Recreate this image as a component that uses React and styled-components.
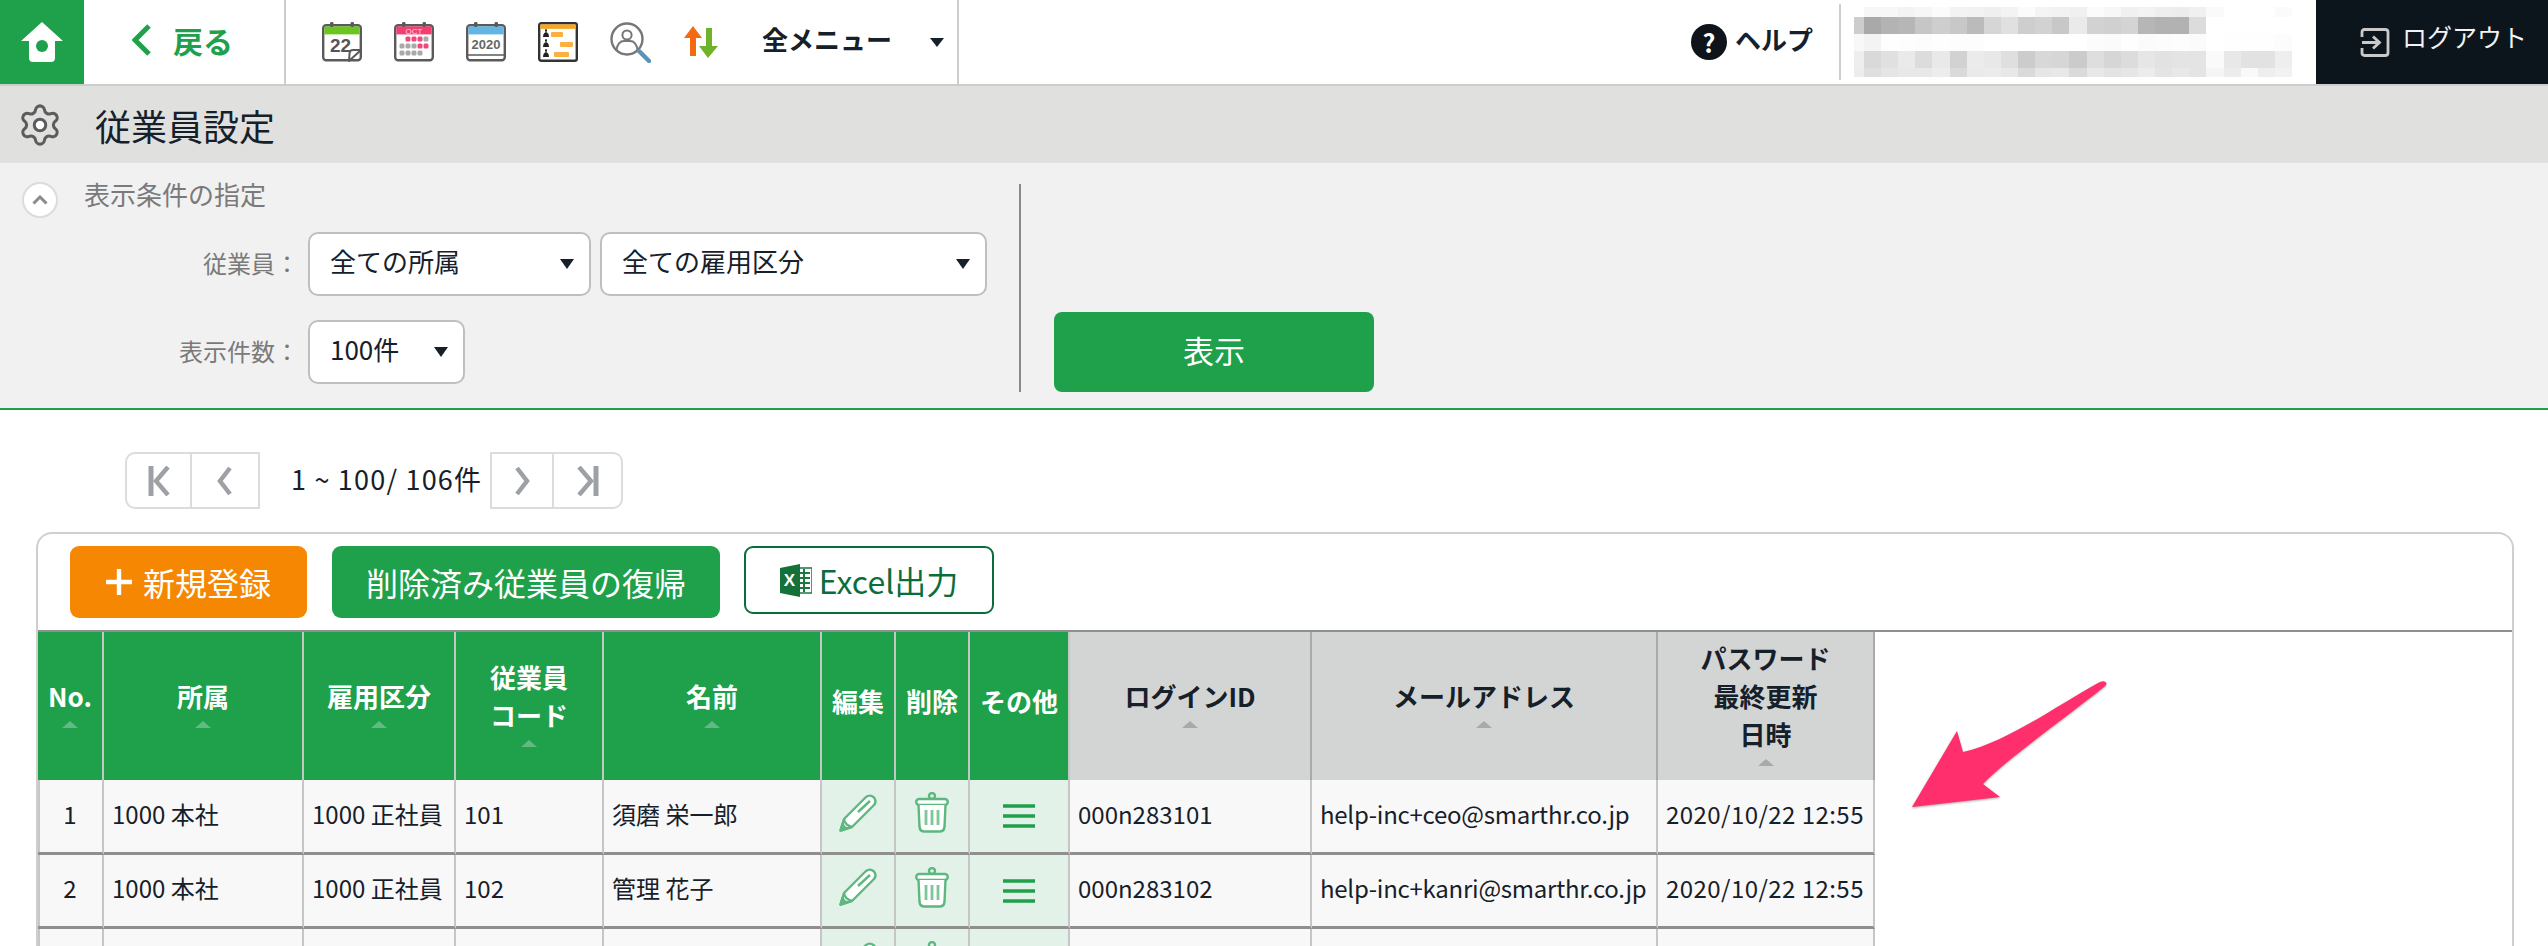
import React from "react";
import styled, { createGlobalStyle } from "styled-components";
import { Settings } from "lucide-react";

const GREEN = "#1fa04b";
const INK = "#16202a";
const FONT = '"Noto Sans CJK JP", "Noto Sans", sans-serif';

const Global = createGlobalStyle`
  html, body { margin: 0; padding: 0; background: #fff; }
  body { font-family: ${FONT}; color: ${INK}; }
  * { box-sizing: border-box; }
`;

const Page = styled.div`
  position: relative;
  width: 2548px;
  height: 946px;
  overflow: hidden;
  background: #fff;
`;

/* ---------- top bar ---------- */
const TopBar = styled.header`
  display: flex;
  align-items: stretch;
  height: 86px;
  border-bottom: 2px solid #cdcdcb;
  background: #fff;
`;
const HomeButton = styled.div`
  width: 84px;
  background: ${GREEN};
  display: flex;
  align-items: center;
  justify-content: center;
`;
const BackButton = styled.div`
  width: 202px;
  border-right: 2px solid #cdcdcd;
  display: flex;
  align-items: center;
  padding: 0 0 5px 48px;
  gap: 21px;
  color: ${GREEN};
  font-size: 30px;
  font-weight: 700;
  line-height: 60px;
`;
const QuickMenu = styled.nav`
  width: 673px;
  border-right: 2px solid #cdcdcd;
  display: flex;
  align-items: center;
  padding-left: 36px;
`;
const QuickIcon = styled.span`
  width: 72px;
  height: 42px;
  display: flex;
  align-items: center;
  flex: none;
`;
const AllMenu = styled.span`
  font-size: 26px;
  font-weight: 700;
  line-height: 40px;
  margin: -6px 38px 0 8px;
  white-space: nowrap;
`;
const Caret = styled.i`
  display: block;
  flex: none;
  width: 0;
  height: 0;
  border-left: ${(p) => p.$w / 2}px solid transparent;
  border-right: ${(p) => p.$w / 2}px solid transparent;
  border-top: ${(p) => p.$h}px solid #16202a;
`;
const Spacer = styled.div`
  flex: 1;
`;
const Help = styled.div`
  display: flex;
  align-items: center;
  gap: 8px;
  font-size: 26px;
  font-weight: 700;
  line-height: 36px;
  padding-right: 26px;
  margin-top: -5px;
`;
const HelpMark = styled.span`
  width: 36px;
  height: 36px;
  margin-top: 5px;
  border-radius: 50%;
  background: #0e1419;
  color: #fff;
  font-size: 25px;
  font-weight: 700;
  line-height: 36px;
  text-align: center;
`;
const HelpLabel = styled.span`
  margin-top: -2px;
`;
const UserBlock = styled.div`
  width: 477px;
  margin: 4px 0;
  border-left: 2px solid #cdcdcd;
  padding: 3px 0 0 13px;
`;
const Logout = styled.div`
  width: 232px;
  background: #0d151c;
  color: #f2f2f2;
  display: flex;
  align-items: center;
  gap: 12px;
  padding-left: 44px;
  font-size: 25px;
  line-height: 30px;
  white-space: nowrap;
`;
const LogoutLabel = styled.span`
  margin-top: -12px;
`;

/* ---------- title ---------- */
const TitleBar = styled.div`
  height: 77px;
  background: #e0e0de;
  display: flex;
  align-items: center;
  padding-left: 17px;
  gap: 32px;
  font-size: 36px;
  line-height: 50px;
  svg circle { fill: #fff; }
`;

/* ---------- filter ---------- */
const Filter = styled.section`
  height: 247px;
  background: #f1f1f1;
  border-bottom: 2px solid ${GREEN};
  display: flex;
  padding: 19px 0 0 22px;
`;
const FilterForm = styled.div`
  width: 997px;
`;
const FilterHead = styled.div`
  display: flex;
  align-items: center;
  gap: 26px;
  height: 36px;
  color: #7a7a7a;
  font-size: 26px;
  line-height: 36px;
`;
const FilterHeadLabel = styled.span`
  margin-top: -12px;
`;
const Collapse = styled.span`
  width: 36px;
  height: 36px;
  border-radius: 50%;
  background: #fff;
  border: 2px solid #dcdcdc;
  display: flex;
  align-items: center;
  justify-content: center;
`;
const FilterRow = styled.div`
  display: flex;
  gap: 9px;
  align-items: center;
  margin-top: ${(p) => p.$top}px;
`;
const FilterLabel = styled.div`
  width: 277px;
  text-align: right;
  color: #7a7a7a;
  font-size: 24px;
  line-height: 36px;
  margin-top: -2px;
`;
const Select = styled.div`
  width: ${(p) => p.$w}px;
  height: 64px;
  background: #fff;
  border: 2px solid #bfbfbf;
  border-radius: 10px;
  display: flex;
  align-items: center;
  justify-content: space-between;
  padding: 0 15px 0 20px;
  font-size: 26px;
  line-height: 36px;
  color: #16202a;
`;
const SelectText = styled.span`
  margin-top: -6px;
`;
const FilterAction = styled.div`
  height: 208px;
  margin-top: 2px;
  border-left: 2px solid #8a8a8a;
  padding-left: 33px;
  display: flex;
  align-items: flex-end;
`;
const ShowButton = styled.div`
  width: 320px;
  height: 80px;
  border-radius: 8px;
  background: ${GREEN};
  color: #fff;
  font-size: 31px;
  line-height: 76px;
  text-align: center;
`;

/* ---------- pager ---------- */
const Pager = styled.div`
  display: flex;
  align-items: center;
  height: 57px;
  margin: 42px 0 0 125px;
`;
const PagerCell = styled.span`
  width: ${(p) => p.$w}px;
  height: 57px;
  border: 2px solid #dcdcdc;
  border-left-width: ${(p) => (p.$join ? 0 : 2)}px;
  border-radius: ${(p) => (p.$side === "l" ? "10px 0 0 10px" : p.$side === "r" ? "0 10px 10px 0" : "0")};
  display: flex;
  align-items: center;
  justify-content: center;
`;
const PagerInfo = styled.div`
  width: 230px;
  padding-left: 31px;
  font-size: 27px;
  letter-spacing: 1.2px;
  line-height: 36px;
  white-space: nowrap;
  margin-top: -4px;
`;

/* ---------- card ---------- */
const Card = styled.section`
  margin: 23px 34px 0 36px;
  border: 2px solid #cfcfcf;
  border-bottom: 0;
  border-radius: 16px 16px 0 0;
  height: 420px;
`;
const Toolbar = styled.div`
  display: flex;
  align-items: flex-start;
  padding: 12px 0 12px 32px;
  height: 98px;
  border-bottom: 2px solid #8f8f8f;
`;
const ActionButton = styled.div`
  height: 72px;
  width: ${(p) => p.$w}px;
  margin-right: ${(p) => p.$gap}px;
  border-radius: 9px;
  background: ${(p) => p.$bg};
  color: #fff;
  font-size: 32px;
  line-height: 70px;
  display: flex;
  align-items: center;
  justify-content: center;
  gap: 11px;
  white-space: nowrap;
`;
const ExcelButton = styled.div`
  width: 250px;
  height: 68px;
  border: 2px solid #0a6e3c;
  border-radius: 9px;
  color: #0a6e3c;
  font-size: 32px;
  line-height: 60px;
  display: flex;
  align-items: center;
  justify-content: center;
  gap: 7px;
`;

/* ---------- table ---------- */
const Table = styled.table`
  table-layout: fixed;
  width: 1837px;
  border-collapse: separate;
  border-spacing: 0;
`;
const Col = styled.col`
  width: ${(p) => p.$w}px;
`;
const Th = styled.th`
  height: 148px;
  padding: 0 0 3px;
  background: ${(p) => (p.$grey ? "#d3d5d4" : GREEN)};
  color: ${(p) => (p.$grey ? INK : "#fff")};
  border-right: 2px solid ${(p) => (p.$grey ? "#a9abab" : "#c2c9c4")};
  font-size: 26px;
  font-weight: 700;
  text-align: center;
  vertical-align: middle;
  line-height: 38px;
`;
const ThLine = styled.div`
  white-space: nowrap;
`;
const PlainHead = styled.div`
  margin-bottom: 7px;
`;
const SortMark = styled.i`
  display: block;
  width: 0;
  height: 0;
  margin: 6px auto 5px;
  border-left: 8px solid transparent;
  border-right: 8px solid transparent;
  border-bottom: 7px solid ${(p) => (p.$grey ? "#a7aaad" : "#62b981")};
`;
const Row = styled.tr`
  td { height: 74px; }
  &:first-child td { height: 75px; }
`;
const Td = styled.td`
  padding: 0 0 5px ${(p) => (p.$center ? 0 : 8)}px;
  background: #f8f8f8;
  border-right: 2px solid #c6c6c6;
  border-bottom: 3px solid #8f8f8f;
  font-size: 24px;
  line-height: 34px;
  letter-spacing: ${(p) => p.$ls || 0}px;
  text-align: ${(p) => (p.$center ? "center" : "left")};
  white-space: nowrap;
  overflow: hidden;
  &:first-child { box-shadow: inset 2px 0 0 #c6c6c6; }
`;
const ActionTd = styled.td`
  padding: 0;
  background: #e2f2e9;
  border-right: 2px solid #c6c6c6;
  border-bottom: 3px solid #8f8f8f;
  text-align: center;
  vertical-align: middle;
`;
const IconWrap = styled.div`
  display: flex;
  justify-content: center;
  margin-bottom: ${(p) => p.$mb || 0}px;
`;

const ArrowMark = styled.svg`
  position: absolute;
  left: 1905px;
  top: 675px;
  overflow: visible;
  filter: drop-shadow(0 1px 1px rgba(60, 60, 60, 0.45));
`;

/* ---------- drawings ---------- */
const Dark = "#5a5a5a";
const CalBase = ({ band, children }) => (
  <svg width="40" height="40" viewBox="0 0 40 40">
    <rect x="1.2" y="3.2" width="37.6" height="35" rx="3" fill="#fff" stroke={Dark} strokeWidth="2.4" />
    <rect x="2.4" y="4.4" width="35.2" height="8" fill={band} />
    <rect x="8" y="0" width="3.4" height="5" rx="1.2" fill={Dark} />
    <rect x="28.6" y="0" width="3.4" height="5" rx="1.2" fill={Dark} />
    {children}
  </svg>
);
const Cal22 = () => (
  <CalBase band="#6cc51e">
    <text x="18.5" y="30" textAnchor="middle" fontFamily="Liberation Sans, sans-serif" fontWeight="700" fontSize="19" fill="#555">22</text>
    <path d="M27 39 L39 28 H31 Q27.5 28 27.5 32 Z" fill="#fff" stroke={Dark} strokeWidth="2" strokeLinejoin="round" />
  </CalBase>
);
const CalOct = () => {
  const dots = [
    [14, 17, 1], [20, 17, 1], [26, 17, 1], [32, 17, 0],
    [8, 24, 0], [14, 24, 0], [20, 24, 0], [26, 24, 1], [32, 24, 1],
    [8, 31, 0], [14, 31, 0], [20, 31, 0], [26, 31, 0],
  ];
  return (
    <CalBase band="#f53d6f">
      <text x="20" y="11.5" textAnchor="middle" fontFamily="Liberation Sans, sans-serif" fontSize="8" fill="#ffd6e2">OCT</text>
      {dots.map(([x, y, h]) => (
        <rect key={`${x}-${y}`} x={x - 2.5} y={y - 2.5} width="5" height="5" rx="1.5" fill={h ? "#f0487a" : "#a9a9a9"} />
      ))}
    </CalBase>
  );
};
const Cal2020 = () => (
  <CalBase band="#62b6e6">
    <text x="20" y="27" textAnchor="middle" fontFamily="Liberation Sans, sans-serif" fontWeight="700" fontSize="13" fill="#666">2020</text>
    <path d="M2 33 H38" stroke={Dark} strokeWidth="1.6" />
  </CalBase>
);
const Gantt = () => (
  <svg width="40" height="40" viewBox="0 0 40 40">
    <rect x="1.2" y="1.2" width="37.6" height="37.6" rx="2" fill="#fff" stroke="#333" strokeWidth="2.4" />
    <rect x="2.4" y="2.4" width="35.2" height="4.5" fill="#f5a623" />
    {[10, 20, 30].map((y) => (
      <path key={y} d={`M8 ${y - 3} a1.6 1.6 0 0 1 0 3 q3 1 3 5 h-6 q0 -4 3 -5 a1.6 1.6 0 0 1 0 -3`} fill="#222" />
    ))}
    <rect x="13" y="10" width="12" height="5" rx="1" fill="#fbb040" />
    <rect x="22" y="20" width="13" height="5" rx="1" fill="#fbb040" />
    <rect x="16" y="30" width="15" height="5" rx="1" fill="#fbb040" />
  </svg>
);
const PersonSearch = () => (
  <svg width="41" height="41" viewBox="0 0 41 41">
    <circle cx="17" cy="17" r="15.5" fill="#fff" stroke="#777" strokeWidth="2.4" />
    <circle cx="17" cy="13" r="4.6" fill="#fff" stroke="#777" strokeWidth="2" />
    <path d="M6.5 28 Q8 19 14 19 H20 Q26 19 27.5 28" fill="none" stroke="#777" strokeWidth="2" />
    <path d="M29 29 L39 39" stroke="#5b93b8" strokeWidth="4.4" strokeLinecap="round" />
  </svg>
);
const SwapArrows = () => (
  <svg width="37" height="32" viewBox="0 0 37 32">
    <path d="M11 0 L20 12 H14 V30 H8 V12 H2 Z" fill="#f26a12" />
    <path d="M26 32 L36 20 H30 V2 H24 V20 H17 Z" fill="#6fb32b" />
  </svg>
);
const House = () => (
  <svg width="42" height="40" viewBox="0 0 42 40">
    <path d="M21 0 L42 19 H34 V36 Q34 40 30 40 H12 Q8 40 8 36 V19 H0 Z" fill="#fff" />
    <circle cx="21" cy="24" r="6" fill={GREEN} />
  </svg>
);
const Chevron = ({ dir = "l", w = 20, h = 32, color = GREEN, sw = 5 }) => (
  <svg width={w} height={h} viewBox={`0 0 ${w} ${h}`}>
    <path
      d={dir === "l" ? `M${w - 3} 2 L3 ${h / 2} L${w - 3} ${h - 2}` : `M3 2 L${w - 3} ${h / 2} L3 ${h - 2}`}
      fill="none"
      stroke={color}
      strokeWidth={sw}
    />
  </svg>
);
const PagerEnd = ({ dir }) => (
  <svg width="22" height="30" viewBox="0 0 22 30">
    {dir === "l" ? (
      <g fill="none" stroke="#9da1a6">
        <path d="M3 0 V30" strokeWidth="5" />
        <path d="M20 1 L8 15 L20 29" strokeWidth="4.5" />
      </g>
    ) : (
      <g fill="none" stroke="#9da1a6">
        <path d="M19 0 V30" strokeWidth="5" />
        <path d="M2 1 L14 15 L2 29" strokeWidth="4.5" />
      </g>
    )}
  </svg>
);
const LogoutIcon = () => (
  <svg width="30" height="29" viewBox="0 0 30 29" fill="none" stroke="#c9c9c9" strokeWidth="2.8">
    <path d="M2 9 V4 Q2 1.5 4.5 1.5 H25 Q28 1.5 28 4 V25 Q28 27.5 25 27.5 H4.5 Q2 27.5 2 25 V20" />
    <path d="M2 14.5 H19 M13 8.5 L19.5 14.5 L13 20.5" />
  </svg>
);
const Plus = () => (
  <svg width="26" height="26" viewBox="0 0 26 26">
    <path d="M13 0 V26 M0 13 H26" stroke="#fff" strokeWidth="4.4" />
  </svg>
);
const ExcelLogo = () => (
  <svg width="32" height="33" viewBox="0 0 32 33">
    <rect x="15" y="4" width="17" height="25" fill="#fff" stroke="#1a7a3e" strokeWidth="1.5" />
    <path d="M18 9 H30 M18 14 H30 M18 19 H30 M18 24 H30 M24 5 V28" stroke="#1a7a3e" strokeWidth="2" />
    <path d="M0 4 L20 0 V33 L0 29 Z" fill="#14713a" />
    <text x="9.5" y="22" textAnchor="middle" fontFamily="Liberation Sans, sans-serif" fontWeight="700" fontSize="17" fill="#fff">X</text>
  </svg>
);
const Pencil = () => (
  <svg width="38" height="38" viewBox="0 0 38 38" fill="none" stroke="#5cb87e" strokeWidth="2.4" strokeLinejoin="round">
    <path d="M1.5 36.5 L5 25 L27 3 Q31 0 35 3.5 Q38 7.5 35 11 L13 33 Z" fill="#fff" />
    <path d="M5 25 Q5.5 31 13 33" />
    <path d="M1.5 36.5 L3.5 30 Q5 34 8 34.5 Z" fill="#5cb87e" />
    <path d="M19 18 L31 7" />
  </svg>
);
const Trash = () => (
  <svg width="34" height="41" viewBox="0 0 34 41" fill="none" stroke="#5cb87e" strokeWidth="2.4" strokeLinejoin="round">
    <circle cx="17" cy="4" r="3" />
    <rect x="1.2" y="7" width="31.6" height="6" rx="3" fill="#fff" />
    <path d="M3.5 13 L4.5 35 Q5 39.5 9.5 39.5 H24.5 Q29 39.5 29.5 35 L30.5 13" fill="#fff" />
    <path d="M11 18 V33 M17 18 V33 M23 18 V33" strokeWidth="2.8" opacity="0.8" />
  </svg>
);
const Bars = () => (
  <svg width="32" height="24" viewBox="0 0 32 24">
    <path d="M0 2 H32 M0 12 H32 M0 22 H32" stroke={GREEN} strokeWidth="3.6" />
  </svg>
);

const MOSAIC = [
  { y: 0, h: 10, c: ["ff","f7","f7","f3","f6","fb","f3","f2","ef","f3","fb","f4","f2","f0","fb","f7","f0","f3","ee","ec","f0","fa","ff","ff","ff","fb"] },
  { y: 10, h: 17, c: ["cd","a9","b3","b6","c6","ce","c8","bb","d6","e0","ce","d2","c8","ea","d2","d0","d4","b6","b2","b2","dc","ff","ff","ff","ff","ff"] },
  { y: 27, h: 17, c: ["f8","f3","fe","fd","fc","fe","fd","fd","ff","ff","ff","ff","ff","ff","fc","fb","fe","fb","fc","fd","fb","ff","fe","fe","fe","fc"] },
  { y: 44, h: 17, c: ["ee","d9","e0","ea","dc","e9","d2","eb","e8","df","cc","d8","d6","cb","de","d6","dc","e6","e2","e4","e4","fa","e8","e2","e2","ee"] },
  { y: 61, h: 9, c: ["ec","df","e5","e8","e8","ed","da","ea","eb","e8","da","e6","e8","da","e8","e3","e6","ec","e4","e8","e4","f5","ec","f9","ee","f2"] },
];
const Mosaic = () => (
  <svg width="438" height="70" viewBox="0 0 438 70" shapeRendering="crispEdges">
    {MOSAIC.map((r) =>
      r.c.map((v, i) => (
        <rect
          key={`${r.y}-${i}`}
          x={i === 0 ? 0 : 10 + (i - 1) * 17.12}
          y={r.y}
          width={i === 0 ? 10 : 17.12}
          height={r.h}
          fill={`#${v}${v}${v}`}
        />
      ))
    )}
  </svg>
);

/* ---------- data ---------- */
const WIDTHS = [66, 200, 152, 148, 218, 74, 74, 100, 242, 346, 217];
const HEADS = [
  { t: ["No."], s: 1 },
  { t: ["所属"], s: 1 },
  { t: ["雇用区分"], s: 1 },
  { t: ["従業員", "コード"], s: 1 },
  { t: ["名前"], s: 1 },
  { t: ["編集"] },
  { t: ["削除"] },
  { t: ["その他"] },
  { t: ["ログインID"], s: 1, g: 1 },
  { t: ["メールアドレス"], s: 1, g: 1 },
  { t: ["パスワード", "最終更新", "日時"], s: 1, g: 1 },
];
const ROWS = [
  ["1", "1000 本社", "1000 正社員", "101", "須磨 栄一郎", "000n283101", "help-inc+ceo@smarthr.co.jp", "2020/10/22 12:55"],
  ["2", "1000 本社", "1000 正社員", "102", "管理 花子", "000n283102", "help-inc+kanri@smarthr.co.jp", "2020/10/22 12:55"],
  ["", "", "", "", "", "", "", ""],
];

export default function App() {
  return (
    <Page>
      <Global />
      <TopBar>
        <HomeButton><House /></HomeButton>
        <BackButton>
          <Chevron />
          <span>戻る</span>
        </BackButton>
        <QuickMenu>
          <QuickIcon><Cal22 /></QuickIcon>
          <QuickIcon><CalOct /></QuickIcon>
          <QuickIcon><Cal2020 /></QuickIcon>
          <QuickIcon><Gantt /></QuickIcon>
          <QuickIcon><PersonSearch /></QuickIcon>
          <QuickIcon><SwapArrows /></QuickIcon>
          <AllMenu>全メニュー</AllMenu>
          <Caret $w={15} $h={9} />
        </QuickMenu>
        <Spacer />
        <Help>
          <HelpMark>?</HelpMark>
          <HelpLabel>ヘルプ</HelpLabel>
        </Help>
        <UserBlock><Mosaic /></UserBlock>
        <Logout>
          <LogoutIcon />
          <LogoutLabel>ログアウト</LogoutLabel>
        </Logout>
      </TopBar>

      <TitleBar>
        <Settings size={46} strokeWidth={1.6} color="#5c5c5c" />
        <span>従業員設定</span>
      </TitleBar>

      <Filter>
        <FilterForm>
          <FilterHead>
            <Collapse>
              <svg width="16" height="10" viewBox="0 0 16 10">
                <path d="M1.5 8.5 L8 2 L14.5 8.5" fill="none" stroke="#8a8a8a" strokeWidth="3" />
              </svg>
            </Collapse>
            <FilterHeadLabel>表示条件の指定</FilterHeadLabel>
          </FilterHead>
          <FilterRow $top={14}>
            <FilterLabel>従業員：</FilterLabel>
            <Select $w={283}><SelectText>全ての所属</SelectText><Caret $w={15} $h={10} /></Select>
            <Select $w={387}><SelectText>全ての雇用区分</SelectText><Caret $w={15} $h={10} /></Select>
          </FilterRow>
          <FilterRow $top={24}>
            <FilterLabel>表示件数：</FilterLabel>
            <Select $w={157}><SelectText>100件</SelectText><Caret $w={15} $h={10} /></Select>
          </FilterRow>
        </FilterForm>
        <FilterAction>
          <ShowButton>表示</ShowButton>
        </FilterAction>
      </Filter>

      <Pager>
        <PagerCell $w={67} $side="l"><PagerEnd dir="l" /></PagerCell>
        <PagerCell $w={68} $join><Chevron w={16} h={30} color="#9da1a6" sw={4.5} /></PagerCell>
        <PagerInfo>1 ~ 100/ 106件</PagerInfo>
        <PagerCell $w={64}><Chevron dir="r" w={16} h={30} color="#9da1a6" sw={4.5} /></PagerCell>
        <PagerCell $w={69} $join $side="r"><PagerEnd dir="r" /></PagerCell>
      </Pager>

      <Card>
        <Toolbar>
          <ActionButton $bg="#f58703" $w={237} $gap={25}><Plus /><span>新規登録</span></ActionButton>
          <ActionButton $bg={GREEN} $w={388} $gap={24}>削除済み従業員の復帰</ActionButton>
          <ExcelButton><ExcelLogo /><span>Excel出力</span></ExcelButton>
        </Toolbar>
        <Table>
          <colgroup>
            {WIDTHS.map((w, i) => <Col key={i} $w={w} />)}
          </colgroup>
          <thead>
            <tr>
              {HEADS.map((h) => (
                <Th key={h.t[0]} $grey={h.g}>
                  {h.s ? (
                    <>
                      {h.t.map((l) => <ThLine key={l}>{l}</ThLine>)}
                      <SortMark $grey={h.g} />
                    </>
                  ) : (
                    <PlainHead>{h.t[0]}</PlainHead>
                  )}
                </Th>
              ))}
            </tr>
          </thead>
          <tbody>
            {ROWS.map((r, i) => (
              <Row key={i}>
                <Td $center>{r[0]}</Td>
                <Td>{r[1]}</Td>
                <Td>{r[2]}</Td>
                <Td>{r[3]}</Td>
                <Td>{r[4]}</Td>
                <ActionTd><IconWrap $mb={7}><Pencil /></IconWrap></ActionTd>
                <ActionTd><IconWrap $mb={7}><Trash /></IconWrap></ActionTd>
                <ActionTd><IconWrap><Bars /></IconWrap></ActionTd>
                <Td>{r[5]}</Td>
                <Td $ls={-0.25}>{r[6]}</Td>
                <Td $ls={0.45}>{r[7]}</Td>
              </Row>
            ))}
          </tbody>
        </Table>
      </Card>

      <ArrowMark width="210" height="140" viewBox="0 0 210 140">
        <path
          d="M7 132 L95 122 L78 109 C102 84 155 47 199 12 Q203 9 200.5 7 Q198 5 193 8 C150 32 100 68 58 77 L52 56 Z"
          fill="#fe2f6c"
        />
      </ArrowMark>
    </Page>
  );
}
